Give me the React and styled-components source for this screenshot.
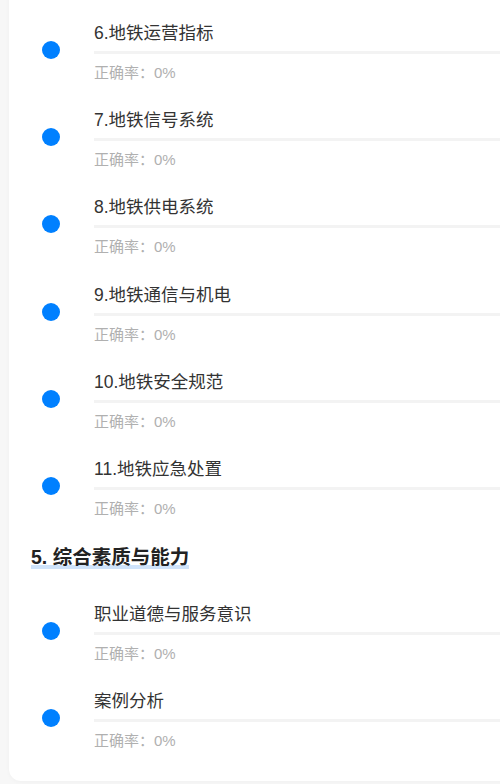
import styled, { createGlobalStyle } from "styled-components";

const GlobalStyle = createGlobalStyle`
  html, body {
    margin: 0;
    padding: 0;
    background: #f7f7f7;
    font-family: "Liberation Sans", "Noto Sans CJK SC", sans-serif;
  }
`;

const chapters = [
  {
    items: [
      "6.地铁运营指标",
      "7.地铁信号系统",
      "8.地铁供电系统",
      "9.地铁通信与机电",
      "10.地铁安全规范",
      "11.地铁应急处置",
    ],
  },
  {
    title: "5. 综合素质与能力",
    items: ["职业道德与服务意识", "案例分析"],
  },
];

const KnowledgeItem = ({ name, rate }) => (
  <Row>
    <Dot />
    <ItemBody>
      <ItemTitle>{name}</ItemTitle>
      <Progress>
        <ProgressFill style={{ width: `${rate}%` }} />
      </Progress>
      <ItemRate>正确率：{rate}%</ItemRate>
    </ItemBody>
  </Row>
);

const App = () => {
  return (
    <>
      <GlobalStyle />
      <Page>
        <Card>
          {chapters.map((chapter, i) => (
            <Section key={i}>
              {chapter.title ? (
                <SectionHead>
                  <SectionTitle>{chapter.title}</SectionTitle>
                </SectionHead>
              ) : null}
              <ItemList>
                {chapter.items.map((name) => (
                  <KnowledgeItem key={name} name={name} rate={0} />
                ))}
              </ItemList>
            </Section>
          ))}
        </Card>
      </Page>
    </>
  );
};

export default App;

const Page = styled.div`
  display: flow-root;
  padding: 0 0 4px 9px;
  overflow: hidden;
`;
const Card = styled.div`
  margin-top: -40px;
  margin-right: -20px;
  padding: 62px 0 3.5px 0;
  background: #fff;
  border-radius: 12px;
  box-shadow: 0 1px 4px rgba(0, 0, 0, 0.03);
`;
const Section = styled.div`
  display: flex;
  flex-direction: column;
`;
const SectionHead = styled.div`
  padding-left: 22px;
  margin-bottom: 34px;
  height: 24px;
  display: flex;
  align-items: center;
`;
const SectionTitle = styled.span`
  display: inline-block;
  font-size: 19.5px;
  line-height: 24px;
  font-weight: 700;
  color: #222;
  background: linear-gradient(
    to bottom,
    transparent 0,
    transparent 20px,
    #cfe3fa 20px,
    #cfe3fa 24px
  );
`;
const ItemList = styled.div`
  display: flex;
  flex-direction: column;
`;
const Row = styled.div`
  display: flex;
  align-items: flex-start;
  padding: 0 0 26.2px 33px;
`;
const Dot = styled.span`
  flex: none;
  width: 18px;
  height: 18px;
  margin-top: 19px;
  border-radius: 50%;
  background: #0080ff;
`;
const ItemBody = styled.div`
  flex: 1;
  margin-left: 34px;
  display: flex;
  flex-direction: column;
`;
const ItemTitle = styled.div`
  font-size: 17.5px;
  line-height: 22px;
  color: #333;
`;
const Progress = styled.div`
  margin-top: 7px;
  height: 3px;
  background: #f3f3f3;
`;
const ProgressFill = styled.div`
  height: 100%;
  background: #0080ff;
`;
const ItemRate = styled.div`
  margin-top: 9px;
  font-size: 15px;
  line-height: 20px;
  color: #b0b0b0;
`;
